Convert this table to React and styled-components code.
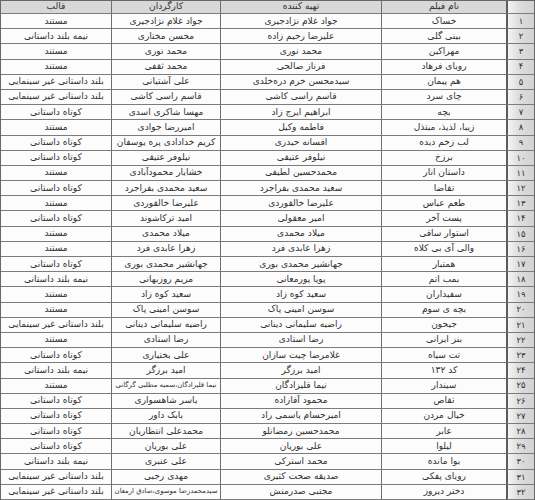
import React from "react";
import styled, { createGlobalStyle } from "styled-components";

const GlobalStyle = createGlobalStyle`
  html, body {
    margin: 0;
    padding: 0;
    background: #ffffff;
  }
`;

const Table = styled.div`
  width: 535px;
  box-sizing: border-box;
  border: 1px solid #686868;
  direction: rtl;
  font-family: "DejaVu Sans", "Noto Sans", sans-serif;
  font-size: 9.1px;
  color: #303030;
`;

const Row = styled.div`
  display: grid;
  grid-template-columns: 28px 125px 161px 109px 1fr;
  height: ${(p) => (p.$head ? "13px" : "15.2px")};
  background: ${(p) => (p.$head ? "#d8d8d8" : "#fcfcfc")};
`;

const Cell = styled.div`
  box-sizing: border-box;
  display: flex;
  align-items: center;
  justify-content: center;
  overflow: hidden;
  white-space: nowrap;
  border-bottom: 1px solid #7c7c7c;
  border-left: 1px solid #6e6e6e;
  font-size: ${(p) => (p.$tight ? "6.9px" : "inherit")};
  line-height: 1;

  &:last-child {
    border-left: none;
  }
`;

const NumCell = styled(Cell)`
  background: linear-gradient(to right, #f4f4f4 0%, #dedede 40%, #d2d2d2 100%);
  border-left: 2px solid #5c5c5c;
  font-size: 8.4px;
`;

const toFa = (n) => String(n).replace(/\d/g, (d) => "۰۱۲۳۴۵۶۷۸۹"[d]);

const films = [
  ["خساک", "جواد غلام نژادجیری", "جواد غلام نژادجیری", "مستند"],
  ["بینی گلی", "علیرضا رحیم زاده", "محسن مختاری", "نیمه بلند داستانی"],
  ["مهراکین", "محمد نوری", "محمد نوری", "مستند"],
  ["رویای فرهاد", "فرناز صالحی", "محمد ثقفی", "مستند"],
  ["هم پیمان", "سیدمحسن خرم دره‌خلدی", "علی آشتیانی", "بلند داستانی غیر سینمایی"],
  ["چای سرد", "قاسم راسی کاشی", "قاسم راسی کاشی", "بلند داستانی غیر سینمایی"],
  ["بچه", "ابراهیم ایرج زاد", "مهسا شاکری اسدی", "کوتاه داستانی"],
  ["زیبا، لذیذ، مبتذل", "فاطمه وکیل", "امیررضا جوادی", "مستند"],
  ["لب زخم دیده", "افسانه حیدری", "کریم خدادادی پره یوسفان", "کوتاه داستانی"],
  ["برزخ", "نیلوفر عتیقی", "نیلوفر عتیقی", "کوتاه داستانی"],
  ["داستان انار", "محمدحسین لطیفی", "خشایار محمودآبادی", "مستند"],
  ["تقاضا", "سعید محمدی بفراجرد", "سعید محمدی بفراجرد", "کوتاه داستانی"],
  ["طعم عباس", "علیرضا خالقوردی", "علیرضا خالقوردی", "مستند"],
  ["پست آخر", "امیر معقولی", "امید ترکاشوند", "کوتاه داستانی"],
  ["استوار ساقی", "میلاد محمدی", "میلاد محمدی", "مستند"],
  ["والی آی بی کلاه", "زهرا عابدی فرد", "زهرا عابدی فرد", "مستند"],
  ["همتبار", "جهانشیر محمدی بوری", "جهانشیر محمدی بوری", "کوتاه داستانی"],
  ["بمب اتم", "پویا پورمعانی", "مریم روزبهانی", "نیمه بلند داستانی"],
  ["سفیداران", "سعید کوه زاد", "سعید کوه زاد", "مستند"],
  ["بچه ی سوم", "سوسن امینی پاک", "سوسن امینی پاک", "مستند"],
  ["جیحون", "راضیه سلیمانی دینانی", "راضیه سلیمانی دینانی", "بلند داستانی غیر سینمایی"],
  ["بنز ایرانی", "رضا استادی", "رضا استادی", "مستند"],
  ["تت سیاه", "غلامرضا چیت سازان", "علی بختیاری", "کوتاه داستانی"],
  ["کد ۱۳۲", "امید برزگر", "امید برزگر", "نیمه بلند داستانی"],
  ["سیندار", "نیما قلیزادگان", "نیما قلیزادگان،سمیه مطلبی گرگانی", "مستند"],
  ["تقاص", "محمود آقازاده", "یاسر شاهسواری", "کوتاه داستانی"],
  ["خیال مردن", "امیرحسام یاسمی راد", "بابک داور", "کوتاه داستانی"],
  ["عابر", "محمدحسین رمضانلو", "محمدعلی انتظاریان", "کوتاه داستانی"],
  ["لیلوا", "علی بوریان", "علی بوریان", "کوتاه داستانی"],
  ["بوا مانده", "محمد استرکی", "علی عنبری", "نیمه بلند داستانی"],
  ["رویای پفکی", "صدیقه صحت کثیری", "مهدی رجبی", "بلند داستانی غیر سینمایی"],
  ["دختر دیروز", "مجتبی صدرمنش", "سیدمحمدرضا موسوی،صادق ارمغان", "بلند داستانی غیر سینمایی"],
];

const App = () => {
  return (
    <>
      <GlobalStyle />
      <Table role="table">
        <Row $head role="row">
          <NumCell role="columnheader" />
          <Cell role="columnheader">نام فیلم</Cell>
          <Cell role="columnheader">تهیه کننده</Cell>
          <Cell role="columnheader">کارگردان</Cell>
          <Cell role="columnheader">قالب</Cell>
        </Row>
        {films.map((f, i) => (
          <Row key={i} role="row">
            <NumCell role="cell">{toFa(i + 1)}</NumCell>
            <Cell role="cell">{f[0]}</Cell>
            <Cell role="cell">{f[1]}</Cell>
            <Cell role="cell" $tight={f[2].length > 26}>
              {f[2]}
            </Cell>
            <Cell role="cell">{f[3]}</Cell>
          </Row>
        ))}
      </Table>
    </>
  );
};

export default App;
